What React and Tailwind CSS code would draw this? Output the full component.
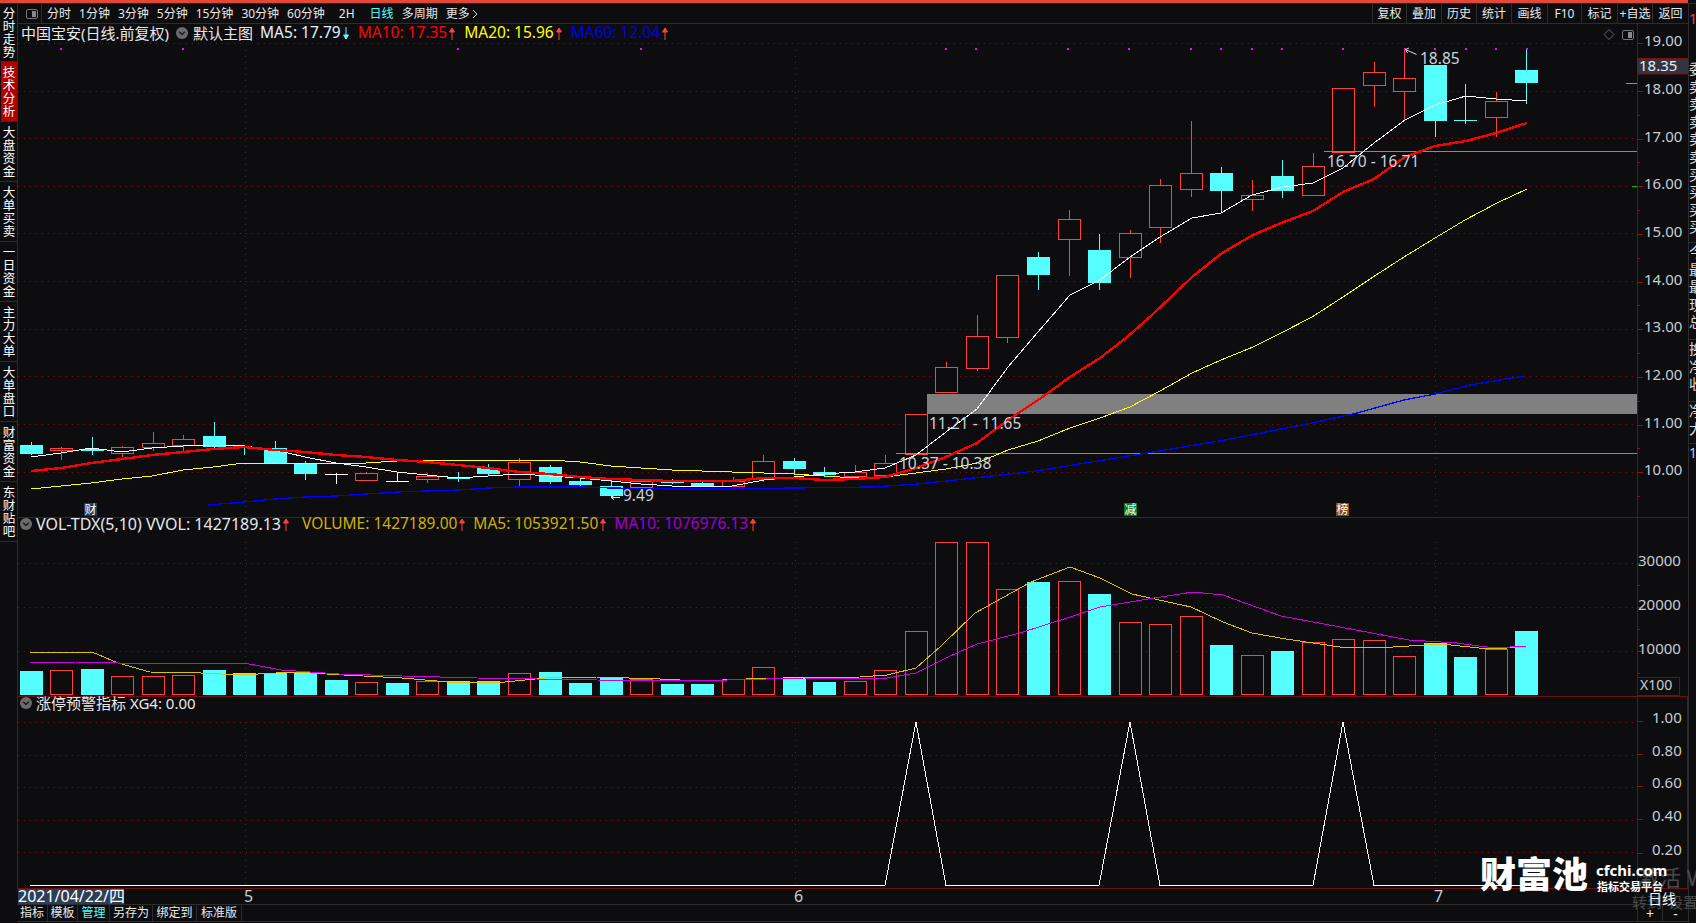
import React from "react";

const bg = "#0d0d10";
const red = "#ff4040";
const cyan = "#55ffff";
const gridRed = "#7a1212";

const xOf = (i) => Math.round(30.5 + 30.53 * i);
const pts = (list) => list.map((p) => p.join(",")).join(" ");

// type, body top, body bottom, wick top, wick bottom
const candles = [
  ["c", 445, 454, 442, 455], ["r", 448, 450, 447, 460], ["c", 449, 451, 437, 455], ["r", 447, 453, 446, 457],
  ["r", 443, 447, 432, 451], ["r", 439, 445, 435, 451], ["c", 436, 447, 422, 449], ["c", 447, 448, 445, 455],
  ["c", 448, 463, 441, 463], ["c", 464, 474, 461, 480], ["w", 474, 474, 473, 484], ["r", 473, 480, 472, 480],
  ["w", 481, 481, 472, 481], ["r", 476, 479, 473, 483], ["c", 477, 479, 472, 482], ["c", 468, 474, 464, 475],
  ["r", 462, 479, 458, 486], ["c", 467, 482, 465, 484], ["c", 481, 485, 477, 486], ["c", 486, 496, 479, 498],
  ["r", 481, 487, 480, 490], ["c", 481, 483, 479, 484], ["c", 483, 486, 482, 487], ["r", 481, 486, 477, 487],
  ["r", 461, 479, 455, 482], ["c", 461, 469, 458, 475], ["c", 472, 475, 467, 477], ["r", 472, 476, 465, 477],
  ["r", 463, 475, 455, 477], ["r", 414, 454, 414, 454], ["r", 367, 392, 362, 393], ["r", 336, 368, 315, 371],
  ["r", 275, 337, 275, 343], ["c", 257, 275, 252, 290], ["r", 219, 239, 210, 276], ["c", 250, 283, 234, 290],
  ["r", 233, 257, 230, 278], ["r", 185, 227, 179, 243], ["r", 173, 189, 121, 197], ["c", 173, 191, 167, 213],
  ["r", 195, 199, 180, 211], ["c", 176, 191, 160, 198], ["r", 166, 195, 153, 195], ["r", 88, 152, 88, 152],
  ["r", 72, 85, 62, 107], ["r", 78, 91, 49, 120], ["c", 65, 121, 65, 137], ["x", 120, 120, 84, 124],
  ["r", 101, 117, 92, 137], ["c", 70, 83, 49, 104],
];

const ma5 = [[31,457],[61,453],[91,448],[122,452],[152,448],[183,446],[213,445],[244,446],[275,450],[305,457],[336,463],[366,467],[397,472],[427,475],[458,478],[488,476],[519,474],[550,476],[580,478],[611,481],[641,484],[672,486],[702,487],[732,486],[764,480],[794,477],[824,474],[855,472],[885,468],[916,455],[946,432],[977,409],[1008,367],[1038,332],[1070,295],[1100,280],[1130,257],[1160,237],[1192,218],[1221,213],[1252,195],[1283,187],[1313,183],[1343,168],[1374,143],[1405,120],[1435,105],[1466,96],[1496,99],[1527,101]];
const ma10 = [[31,471],[61,468],[91,463],[122,459],[152,455],[183,452],[213,449],[244,447],[275,450],[305,452],[336,455],[366,457],[397,460],[427,462],[458,465],[488,468],[519,472],[550,474],[580,477],[611,479],[641,480],[672,481],[702,481],[732,481],[764,478],[794,478],[824,480],[855,479],[885,477],[916,468],[946,457],[977,443],[1008,420],[1041,398],[1070,377],[1100,358],[1126,338],[1152,315],[1192,277],[1222,253],[1253,235],[1281,223],[1313,211],[1343,192],[1374,179],[1405,157],[1435,146],[1466,141],[1496,133],[1527,123]];
const ma20 = [[31,489],[61,486],[91,483],[122,479],[152,476],[183,470],[213,467],[244,463],[336,463],[366,463],[397,461],[427,460],[519,460],[550,460],[580,462],[611,466],[641,468],[672,470],[702,471],[732,472],[764,473],[794,474],[840,477],[885,477],[916,473],[946,469],[977,463],[1008,450],[1038,441],[1070,428],[1100,418],[1130,407],[1160,391],[1192,373],[1221,360],[1253,347],[1281,333],[1312,317],[1343,297],[1373,277],[1404,257],[1435,238],[1465,220],[1497,203],[1527,189]];
const ma60 = [[208,505],[244,502],[275,499],[305,497],[336,496],[366,494],[397,492],[427,491],[458,490],[488,488],[519,487],[580,487],[611,488],[672,489],[732,489],[794,488],[871,487],[918,484],[965,479],[1036,471],[1147,453],[1225,440],[1307,424],[1357,413],[1404,400],[1435,394],[1470,385],[1524,376]];

const volTops = [671,670,669,676,676,675,670,673,673,673,680,682,683,681,681,681,673,672,683,677,679,684,684,679,667,677,682,681,670,631,542,542,589,582,581,594,622,624,616,645,655,651,642,639,640,656,643,657,649,631];
const volMa5 = [[30,653],[46,652],[92,652],[118,663],[150,672],[201,673],[241,675],[293,672],[344,675],[402,678],[448,682],[505,682],[545,678],[597,677],[660,679],[700,681],[746,679],[804,678],[860,677],[887,675],[916,668],[940,647],[975,613],[1031,582],[1070,567],[1100,578],[1132,594],[1191,607],[1223,622],[1252,633],[1286,639],[1340,647],[1393,647],[1441,644],[1489,649],[1526,647]];
const volMa10 = [[30,662],[75,662],[118,663],[244,663],[281,670],[339,674],[402,676],[477,678],[597,680],[689,681],[804,678],[860,679],[887,678],[916,673],[948,657],[977,644],[1020,633],[1070,617],[1100,607],[1148,599],[1193,592],[1223,595],[1281,616],[1340,627],[1409,640],[1457,643],[1494,648],[1526,646]];

const dots = [61,183,458,641,946,976,1068,1129,1191,1221,1252,1282,1343,1405,1435,1466,1496,1527];
const priceLabels = ["19.00","18.00","17.00","16.00","15.00","14.00","13.00","12.00","11.00","10.00"];
const leftTabs = ["分时走势","技术分析","大盘资金","大单买卖","一日资金","主力大单","大单盘口","财富资金","东财贴吧"];
const rightTools = [["复权",34],["叠加",35],["历史",35],["统计",35],["画线",36],["F10",34],["标记",36],["+自选",35],["返回",36]];
const bottomTabs = [["指标",31],["模板",30],["管理",32],["另存为",43],["绑定到",44],["标准版",45]];

const xgLine = [[30,885.5],[885,885.5],[916,722],[946,885.5],[1099,885.5],[1130,722],[1160,885.5],[1313,885.5],[1343,722],[1374,885.5],[1527,885.5]];

const CircleIcon = () => (
  <svg width="12" height="12" viewBox="0 0 12 12" className="shrink-0">
    <circle cx="6" cy="6" r="6" fill="#6b6b6b" />
    <path d="M3.2 4.8 L6 7.6 L8.8 4.8" fill="none" stroke="#1a1a1a" strokeWidth="1.4" />
  </svg>
);

const PanelIcon = () => (
  <svg width="12" height="10" viewBox="0 0 12 10" className="shrink-0">
    <rect x="0.5" y="0.5" width="11" height="9" rx="1.5" fill="none" stroke="#777" />
    <rect x="6" y="2" width="4" height="6" fill="#8a8a8a" />
  </svg>
);

const Arrow = ({ down }) => (
  <svg width="6" height="13" viewBox="0 0 6 13" className="shrink-0 ml-[2px]">
    {down ? (
      <path d="M3 0 V12 M3 12 L0.5 8 H5.5 Z" fill="#55ffff" stroke="#55ffff" />
    ) : (
      <path d="M3 13 V1 M3 1 L0.5 5 H5.5 Z" fill="#ff4040" stroke="#ff4040" />
    )}
  </svg>
);

const Grid = ({ ys, vFrom, vTo }) => (
  <g stroke={gridRed} strokeDasharray="1 5" shapeRendering="crispEdges">
    {ys.map((y) => (
      <line key={y} x1="18" x2="1637" y1={y + 0.5} y2={y + 0.5} />
    ))}
    {[245, 795, 1435].map((x) => (
      <line key={x} x1={x + 0.5} x2={x + 0.5} y1={vFrom} y2={vTo} />
    ))}
  </g>
);

const Line = ({ data, color, width = 1 }) => (
  <polyline points={pts(data)} fill="none" stroke={color} strokeWidth={width} strokeLinejoin="round" shapeRendering="crispEdges" />
);

const Candle = ({ c, i }) => {
  const [type, top, bottom, wickTop, wickBottom] = c;
  const x = xOf(i);
  const color = type === "r" ? red : type === "c" || type === "x" ? cyan : "#ffffff";
  return (
    <g shapeRendering="crispEdges">
      <line x1={x + 0.5} x2={x + 0.5} y1={wickTop} y2={wickBottom} stroke={color} />
      {type === "r" && (
        <rect x={x - 10.5} y={top + 0.5} width="22" height={bottom - top} fill={bg} stroke={color} />
      )}
      {type === "c" && <rect x={x - 11} y={top} width="23" height={Math.max(bottom - top, 1)} fill={color} />}
      {(type === "w" || type === "x") && <line x1={x - 11} x2={x + 12} y1={top + 0.5} y2={top + 0.5} stroke={color} />}
    </g>
  );
};

const Badge = ({ x, color, text }) => (
  <g>
    <rect x={x} y="503" width="13" height="13" fill={color} />
    <text x={x + 0.5} y="514" fontSize="12" fill="#ffffff">{text}</text>
  </g>
);

const Note = ({ x, y, text }) => (
  <text x={x} y={y} fontSize="15.5" fill="#c8d4de">{text}</text>
);

const PriceChart = () => (
  <svg width="1671" height="493" viewBox="17 24 1671 493" className="block">
    <Grid ys={[43,91,138,186,233,281,329,376,424,472]} vFrom={50} vTo={517} />
    <line x1="17.5" x2="17.5" y1="24" y2="517" stroke="#2c2c2c" />
    {candles.map((c, i) => <Candle key={i} c={c} i={i} />)}
    <rect x="927" y="394" width="710" height="20" fill="#808080" />
    <g stroke="#8a8a8a" shapeRendering="crispEdges">
      <line x1="896" x2="1637" y1="453.5" y2="453.5" />
      <line x1="1324" x2="1637" y1="151.5" y2="151.5" />
    </g>
    <Line data={ma60} color="#0000ff" width={1.3} />
    <Line data={ma20} color="#ffff00" />
    <Line data={ma5} color="#ffffff" />
    <Line data={ma10} color="#ff0000" width={2.4} />
    {dots.map((x) => <rect key={x} x={x - 1} y="48" width="2" height="2" fill="#ff00ff" />)}
    <path d="M1416.5 54.5 L1405.5 49.5 M1405.5 49.5 L1409 48 M1405.5 49.5 L1407.5 53" stroke="#dddddd" fill="none" />
    <Note x="1420" y="64" text="18.85" />
    <Note x="1327" y="167" text="16.70 - 16.71" />
    <Note x="929" y="429" text="11.21 - 11.65" />
    <Note x="899" y="469" text="10.37 - 10.38" />
    <Note x="623" y="501" text="9.49" />
    <path d="M620 497.5 L611 497.5 M611 497.5 L614 495.5 M611 497.5 L614 499.5" stroke="#dddddd" fill="none" />
    <Badge x={84} color="#1d3f62" text="财" />
    <Badge x={1124} color="#0a7a20" text="减" />
    <Badge x={1336} color="#8a4a10" text="榜" />
    <g transform="translate(1609 34.5)">
      <path d="M0 -5 L5 0 L0 5 L-5 0 Z" fill="none" stroke="#666" />
    </g>
    <line x1="1637.5" x2="1637.5" y1="24" y2="517" stroke="#6e0f0f" />
    {priceLabels.map((t, i) => {
      const y = 43.3 + i * 47.67;
      return (
        <g key={t}>
          <line x1="1637" x2="1643" y1={Math.round(y) + 0.5} y2={Math.round(y) + 0.5} stroke="#8a1515" />
          <line x1="1637" x2="1640" y1={Math.round(y + 23.8) + 0.5} y2={Math.round(y + 23.8) + 0.5} stroke="#8a1515" />
          <text x="1644" y={y + 3} fontSize="15" fill="#c8ccd0">{t}</text>
        </g>
      );
    })}
    <line x1="1626" x2="1637" y1="83.5" y2="83.5" stroke="#b0a000" />
    <line x1="1632" x2="1637" y1="186.5" y2="186.5" stroke="#00c000" />
    <rect x="1637.5" y="58.5" width="51" height="15.5" fill="#33343f" stroke="#7a1212" />
    <text x="1639" y="71" fontSize="15" fill="#e8eef4">18.35</text>
  </svg>
);

const VolumeChart = () => (
  <svg width="1671" height="178" viewBox="17 518 1671 178" className="block">
    <Grid ys={[563,607,651]} vFrom={542} vTo={696} />
    <line x1="17.5" x2="17.5" y1="518" y2="696" stroke="#2c2c2c" />
    {volTops.map((top, i) => {
      const x = xOf(i);
      return candles[i][0] === "r" ? (
        <rect key={i} x={x - 10.5} y={top + 0.5} width="22" height={694 - top} fill={bg} stroke={red} shapeRendering="crispEdges" />
      ) : (
        <rect key={i} x={x - 11} y={top} width="23" height={695 - top} fill={cyan} shapeRendering="crispEdges" />
      );
    })}
    <Line data={volMa5} color="#e0c000" />
    <Line data={volMa10} color="#d000e0" />
    <line x1="1637.5" x2="1637.5" y1="518" y2="696" stroke="#6e0f0f" />
    {[["30000",563],["20000",607],["10000",651]].map(([t, y]) => (
      <g key={t}>
        <line x1="1637" x2="1643" y1={y + 0.5} y2={y + 0.5} stroke="#8a1515" />
        <line x1="1637" x2="1640" y1={y + 22.5} y2={y + 22.5} stroke="#8a1515" />
        <text x="1638" y={y + 3} fontSize="15" fill="#c8ccd0">{t}</text>
      </g>
    ))}
    <rect x="1637.5" y="677.5" width="42" height="18" fill="none" stroke="#6e0f0f" />
    <text x="1640" y="690" fontSize="14" fill="#c8ccd0">X100</text>
  </svg>
);

const SignalChart = () => (
  <svg width="1671" height="191" viewBox="17 697 1671 191" className="block">
    <Grid ys={[722,755,787,820,852]} vFrom={722} vTo={888} />
    <line x1="17.5" x2="17.5" y1="697" y2="888" stroke="#2c2c2c" />
    <Line data={xgLine} color="#ffffff" />
    <line x1="1637.5" x2="1637.5" y1="697" y2="888" stroke="#6e0f0f" />
    <line x1="1687.5" x2="1687.5" y1="697" y2="888" stroke="#6e0f0f" />
    {[["1.00",718],["0.80",751],["0.60",783],["0.40",816],["0.20",850]].map(([t, y]) => (
      <g key={t}>
        <line x1="1637" x2="1643" y1={y + 3.5} y2={y + 3.5} stroke="#8a1515" />
        <text x="1652" y={y + 5} fontSize="15" fill="#c8ccd0">{t}</text>
      </g>
    ))}
  </svg>
);

const App = () => {
  return (
    <div className="w-[1696px] h-[923px] bg-[#0d0d10] overflow-hidden flex flex-col relative font-['Noto_Sans','Noto_Sans_CJK_SC',sans-serif] text-[#e8e8e8]">
      <div className="h-[3px] bg-[#e0483a] mr-[8px] shrink-0"></div>
      <div className="h-[1px] bg-[#2a2a2a] shrink-0"></div>
      <div className="flex flex-1 min-h-0">
        {/* left tabs */}
        <div className="w-[17px] shrink-0 flex flex-col">
          {leftTabs.map((tab, i) => (
            <div
              key={tab}
              className={`${i === 0 ? "h-[58px]" : "h-[60px]"} border-b border-[#2c2c2c] flex items-center justify-center`}>
              <div
                className={`w-[16px] h-full ml-[1px] flex items-center justify-center ${i === 1 ? "bg-[#b00000]" : ""}`}>
                <div className="w-[13px] text-[12.5px] leading-[13px] text-white text-center">{tab}</div>
              </div>
            </div>
          ))}
        </div>

        <div className="w-[1671px] shrink-0 flex flex-col">
          {/* toolbar */}
          <div className="h-[20px] shrink-0 flex items-center justify-between border-b border-[#2c2c2c] border-l text-[12px]">
            <div className="flex items-center h-full">
              <div className="w-[24px] h-full flex items-center justify-center border-r border-[#2c2c2c] pl-[5px] pr-[1px]">
                <PanelIcon />
              </div>
              <div className="flex items-center gap-[8px] ml-[5px]">
                <span>分时</span>
                <span>1分钟</span>
                <span>3分钟</span>
                <span>5分钟</span>
                <span>15分钟</span>
                <span>30分钟</span>
                <span className="mr-[6px]">60分钟</span>
                <span className="mr-[7px]">2H</span>
                <span className="text-[#55ffff]">日线</span>
                <span>多周期</span>
                <span className="flex items-center gap-[2px]">
                  更多
                  <svg width="6" height="10" viewBox="0 0 6 10">
                    <path d="M1 1 L5 5 L1 9" fill="none" stroke="#d8d8d8" />
                  </svg>
                </span>
              </div>
            </div>
            <div className="flex h-full">
              {rightTools.map(([label, w]) => (
                <div
                  key={label}
                  className="border-l border-[#2c2c2c] flex items-center justify-center"
                  style={{ width: w }}>
                  {label}
                </div>
              ))}
            </div>
          </div>

          {/* price */}
          <div className="relative h-[493px] shrink-0">
            <PriceChart />
            <div className="absolute left-[4px] top-[0px] h-[18px] flex items-center text-[15.5px] whitespace-nowrap">
              <span className="text-[15px]">中国宝安(日线.前复权)</span>
              <span className="ml-[7px]"><CircleIcon /></span>
              <span className="ml-[5px] text-[15px]">默认主图</span>
              <span className="ml-[7px] text-[#e4f0ff]">MA5: 17.79</span>
              <Arrow down />
              <span className="ml-[9px] text-[#ff0000]">MA10: 17.35</span>
              <Arrow />
              <span className="ml-[9px] text-[#ffff00]">MA20: 15.96</span>
              <Arrow />
              <span className="ml-[9px] text-[#0000e0]">MA60: 12.04</span>
              <Arrow />
            </div>
            <div className="absolute left-[1605px] top-[6px]"><PanelIcon /></div>
          </div>
          <div className="h-[1px] bg-[#6e0f0f] shrink-0"></div>

          {/* volume */}
          <div className="relative h-[178px] shrink-0">
            <VolumeChart />
            <div className="absolute left-[3px] top-[-3px] h-[18px] flex items-center text-[15.5px] whitespace-nowrap">
              <CircleIcon />
              <span className="ml-[4px] text-[16px]">VOL-TDX(5,10) VVOL: 1427189.13</span>
              <Arrow />
              <span className="ml-[13px] text-[#d0b000]">VOLUME: 1427189.00</span>
              <Arrow />
              <span className="ml-[8px] text-[#d0b000]">MA5: 1053921.50</span>
              <Arrow />
              <span className="ml-[8px] text-[#a000d0]">MA10: 1076976.13</span>
              <Arrow />
            </div>
          </div>
          <div className="h-[1px] bg-[#6e0f0f] shrink-0"></div>

          {/* signal */}
          <div className="relative h-[191px] shrink-0">
            <SignalChart />
            <div className="absolute left-[3px] top-[-3px] h-[18px] flex items-center text-[15px] whitespace-nowrap">
              <CircleIcon />
              <span className="ml-[4px]">涨停预警指标 XG4: 0.00</span>
            </div>
          </div>

          {/* date axis */}
          <div className="h-[16px] shrink-0 flex items-center border-t border-[#6e0f0f] text-[16px] leading-[15px] text-[#c8ccd0]">
            <span className="ml-[1px] w-[106px] h-[15px] bg-[#2c3f58] text-white whitespace-nowrap">2021/04/22/四</span>
            <span className="ml-[120px] w-[550px]">5</span>
            <span className="w-[640px]">6</span>
            <span>7</span>
          </div>

          {/* bottom tabs */}
          <div className="h-[18px] shrink-0 flex items-center border-t border-b border-[#2c2c2c] text-[12px]">
            {bottomTabs.map(([label, w], i) => (
              <div
                key={label}
                className={`h-full flex items-center justify-center border-r border-[#2c2c2c] ${i === 2 ? "text-[#55ffff]" : ""}`}
                style={{ width: w }}>
                {label}
              </div>
            ))}
            <div className="ml-auto flex h-full text-[14px]">
              <div className="w-[25px] border-l border-[#2c2c2c] flex items-center justify-center">+</div>
              <div className="w-[26px] border-l border-[#2c2c2c] flex items-center justify-center">-</div>
            </div>
          </div>
        </div>

        {/* clipped right panel */}
        <div className="w-[8px] shrink-0 border-l border-[#2c2c2c] overflow-hidden text-[14px] leading-[17.6px] whitespace-nowrap text-[#dddddd]">
          <div className="h-[20px] pt-[6px] text-[#ff4040]">1</div>
          <div className="h-[36px]"></div>
          <div className="h-[183px] border-b border-[#2c2c2c]">
            <div>委比</div>
            <div>卖五</div>
            <div>卖四</div>
            <div>卖三</div>
            <div>卖二</div>
            <div>卖一</div>
            <div>买一</div>
            <div>买二</div>
            <div>买三</div>
            <div>买四</div>
          </div>
          <div className="h-[97px] border-b border-[#2c2c2c]">
            <div>今开</div>
            <div>最高</div>
            <div>最低</div>
            <div>现量</div>
            <div>总量</div>
          </div>
          <div className="h-[62px] border-b border-[#2c2c2c]">
            <div>换手</div>
            <div>净资</div>
            <div>收益</div>
          </div>
          <div className="h-[42px] border-b border-[#2c2c2c]">
            <div>净流</div>
            <div>大单</div>
          </div>
          <div className="text-[#9fd0ff]">1</div>
        </div>
      </div>

      {/* watermark */}
      <div className="absolute left-[1637px] top-[866px] text-[22px] leading-[22px] text-[#4a4a4a] whitespace-nowrap">激活 Windows</div>
      <div className="absolute left-[1632px] top-[894px] text-[15px] leading-[16px] text-[#4a4a4a] whitespace-nowrap">转到"设置"</div>
      <div className="absolute left-[1648px] top-[891px] text-[14px] leading-[16px] text-white whitespace-nowrap">日线</div>
      <div className="absolute left-[1480px] top-[853px] text-[36px] leading-[44px] font-black text-white whitespace-nowrap">财富池</div>
      <div className="absolute left-[1596px] top-[860px] text-[15px] leading-[20px] font-bold text-white whitespace-nowrap">cfchi.com</div>
      <div className="absolute left-[1597px] top-[880px] text-[11px] leading-[14px] font-bold text-white whitespace-nowrap">指标交易平台</div>
    </div>
  );
};

export default App;
